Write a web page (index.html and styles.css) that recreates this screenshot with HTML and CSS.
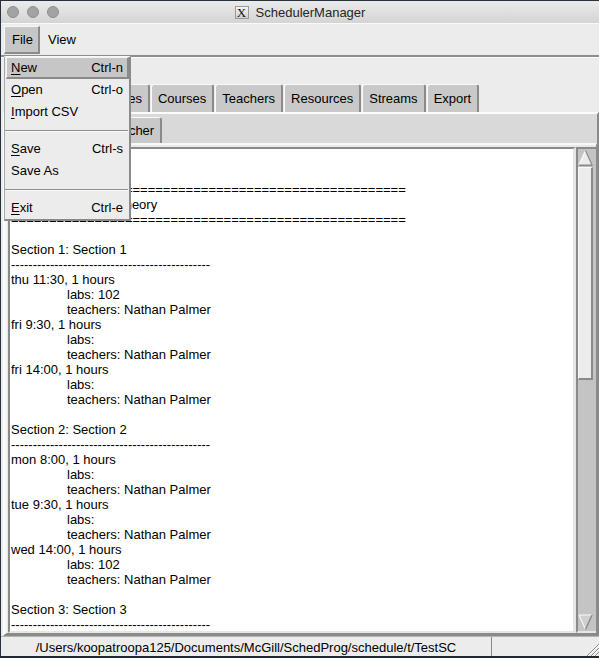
FILE: index.html
```html
<!DOCTYPE html>
<html>
<head>
<meta charset="utf-8">
<title>SchedulerManager</title>
<link rel="stylesheet" href="styles.css">
</head>
<body>
<div class="window">
  <div class="titlebar">
    <div class="lights"><span class="light"></span><span class="light"></span><span class="light"></span></div>
    <div class="title"><span class="xicon">X</span><span class="title-text">SchedulerManager</span></div>
    <div class="title-spacer"></div>
  </div>
  <div class="menubar">
    <span class="mb active">File</span>
    <span class="mb">View</span>
  </div>
  <div class="toolbar"></div>
  <div class="tabs">
    <span class="tab selected">Overview</span>
    <span class="tab">Schedules</span>
    <span class="tab">Courses</span>
    <span class="tab">Teachers</span>
    <span class="tab">Resources</span>
    <span class="tab">Streams</span>
    <span class="tab">Export</span>
  </div>
  <div class="panel">
    <div class="subtabs">
      <span class="tab sub">Course</span>
      <span class="tab sub">Teacher</span>
    </div>
    <div class="subpanel">
      <div class="textframe">
        <div class="text">
          <div class="ln">Nathan Palmer</div>
          <div class="ln"></div>
          <div class="ln">====================================================</div>
          <div class="ln">Course:&#8201;Schedule Theory</div>
          <div class="ln">====================================================</div>
          <div class="ln"></div>
          <div class="ln">Section 1: Section 1</div>
          <div class="ln">----------------------------------------------</div>
          <div class="ln">thu 11:30, 1 hours</div>
          <div class="ln ind">labs: 102</div>
          <div class="ln ind">teachers: Nathan Palmer</div>
          <div class="ln">fri 9:30, 1 hours</div>
          <div class="ln ind">labs:</div>
          <div class="ln ind">teachers: Nathan Palmer</div>
          <div class="ln">fri 14:00, 1 hours</div>
          <div class="ln ind">labs:</div>
          <div class="ln ind">teachers: Nathan Palmer</div>
          <div class="ln"></div>
          <div class="ln">Section 2: Section 2</div>
          <div class="ln">----------------------------------------------</div>
          <div class="ln">mon 8:00, 1 hours</div>
          <div class="ln ind">labs:</div>
          <div class="ln ind">teachers: Nathan Palmer</div>
          <div class="ln">tue 9:30, 1 hours</div>
          <div class="ln ind">labs:</div>
          <div class="ln ind">teachers: Nathan Palmer</div>
          <div class="ln">wed 14:00, 1 hours</div>
          <div class="ln ind">labs: 102</div>
          <div class="ln ind">teachers: Nathan Palmer</div>
          <div class="ln"></div>
          <div class="ln">Section 3: Section 3</div>
          <div class="ln">----------------------------------------------</div>
        </div>
        <div class="scrollbar">
          <div class="arrow up">
            <svg width="15" height="18" viewBox="0 0 15 18">
              <polygon points="7.5,1.5 14,16 1,16" fill="#ececec"/>
              <line x1="1" y1="16" x2="7.5" y2="1.5" stroke="#fafafa" stroke-width="1.2"/>
              <line x1="7.5" y1="1.5" x2="14" y2="16" stroke="#8a8a8a" stroke-width="1.2"/>
              <line x1="1" y1="16.3" x2="14.5" y2="16.3" stroke="#8a8a8a" stroke-width="1.6"/>
            </svg>
          </div>
          <div class="thumb"></div>
          <div class="trough"></div>
          <div class="arrow down">
            <svg width="15" height="17" viewBox="0 0 15 17">
              <polygon points="1,1 14,1 7.5,15.5" fill="#cfcfcf"/>
              <line x1="1" y1="1" x2="14" y2="1" stroke="#f4f4f4" stroke-width="1.2"/>
              <line x1="1" y1="1" x2="7.5" y2="15.5" stroke="#f4f4f4" stroke-width="1.2"/>
              <line x1="14" y1="1" x2="7.5" y2="15.5" stroke="#8a8a8a" stroke-width="1.4"/>
            </svg>
          </div>
        </div>
      </div>
    </div>
  </div>
  <div class="statusbar">
    <div class="cell path">/Users/koopatroopa125/Documents/McGill/SchedProg/schedule/t/TestSC</div>
    <div class="cell gripcell">
      <svg class="grip" width="13" height="13" viewBox="0 0 13 13">
        <line x1="13" y1="1" x2="1" y2="13" stroke="#8a8a8a" stroke-width="1"/>
        <line x1="13" y1="2" x2="2" y2="13" stroke="#ffffff" stroke-width="1"/>
        <line x1="13" y1="5" x2="5" y2="13" stroke="#8a8a8a" stroke-width="1"/>
        <line x1="13" y1="6" x2="6" y2="13" stroke="#ffffff" stroke-width="1"/>
        <line x1="13" y1="9" x2="9" y2="13" stroke="#8a8a8a" stroke-width="1"/>
        <line x1="13" y1="10" x2="10" y2="13" stroke="#ffffff" stroke-width="1"/>
      </svg>
    </div>
  </div>

  <div class="menu">
    <div class="mi hl"><span><u>N</u>ew</span><span>Ctrl-n</span></div>
    <div class="mi"><span><u>O</u>pen</span><span>Ctrl-o</span></div>
    <div class="mi"><span><u>I</u>mport CSV</span><span></span></div>
    <div class="sep"><span class="sepline"></span></div>
    <div class="mi"><span><u>S</u>ave</span><span>Ctrl-s</span></div>
    <div class="mi"><span>Save As</span><span></span></div>
    <div class="sep"><span class="sepline"></span></div>
    <div class="mi"><span><u>E</u>xit</span><span>Ctrl-e</span></div>
  </div>
</div>
</body>
</html>
```

FILE: styles.css
```css
* { box-sizing: border-box; }

html, body {
  margin: 0;
  padding: 0;
  background: #1f2630;
}

body {
  font-family: "Liberation Sans", Arial, Helvetica, sans-serif;
  font-size: 13px;
  color: #000;
}

.window {
  position: relative;
  width: 599px;
  height: 658px;
  overflow: hidden;
  display: flex;
  flex-direction: column;
  background: #ececec;
  border-top: 1px solid #2a3038;
  border-left: 1px solid #2a3038;
  border-bottom: 2px solid #222831;
}

/* ---------- title bar ---------- */
.titlebar {
  flex: 0 0 23px;
  display: grid;
  grid-template-columns: 1fr auto 1fr;
  align-items: center;
  background: linear-gradient(#ebebeb, #d4d4d4);
  border-bottom: 1px solid #fafafa;
}

.lights {
  display: flex;
  gap: 8px;
  padding-left: 6px;
}

.light {
  width: 12px;
  height: 12px;
  border-radius: 50%;
  background: #a3a3a3;
  border: 1px solid #909090;
}

.title {
  display: flex;
  align-items: center;
  gap: 7px;
  padding-left: 0;
  color: #262626;
}

.xicon {
  width: 14px;
  height: 13px;
  display: flex;
  align-items: center;
  justify-content: center;
  font-family: "Liberation Serif", "Times New Roman", serif;
  font-size: 13px;
  line-height: 1;
  background: linear-gradient(#f4f4f4, #d0d0d0);
  border: 1px solid #9a9a9a;
  color: #111;
}

.title-text {
  font-size: 13px;
}

/* ---------- menubar ---------- */
.menubar {
  flex: 0 0 33px;
  display: flex;
  align-items: flex-start;
  padding: 2px 0 0 3px;
  border-bottom: 2px solid #8e8e8e;
}

.mb {
  height: 28px;
  display: flex;
  align-items: center;
  padding: 0 5px 0 7px;
  border-style: solid;
  border-width: 1px 2px 2px 1px;
  border-color: transparent;
}

.mb.active {
  background: #c6c6c6;
  border-color: #f6f6f6 #8a8a8a #8a8a8a #f6f6f6;
}

/* ---------- toolbar ---------- */
.toolbar {
  flex: 0 0 27px;
  border-top: 1px solid #fbfbfb;
}

/* ---------- tabs ---------- */
.tabs {
  flex: 0 0 28px;
  display: flex;
  align-items: flex-end;
  gap: 1px;
  padding-left: 3px;
}

.tab {
  height: 28px;
  display: flex;
  align-items: center;
  padding: 0 6px 0 6px;
  background: #c9c9c9;
  border-style: solid;
  border-width: 1px 2px 0 1px;
  border-color: #f9f9f9 #8a8a8a #f9f9f9 #f9f9f9;
  border-radius: 3px 3px 0 0;
  white-space: nowrap;
}

.tab.selected {
  background: #d9d9d9;
}

.tab.sub {
  height: 26px;
}

/* ---------- panel ---------- */
.panel {
  flex: 1 1 auto;
  display: flex;
  flex-direction: column;
  margin-left: 2px;
  background: #d9d9d9;
  border-style: solid;
  border-width: 2px 2px 2px 2px;
  border-color: #fbfbfb #8a8a8a #8a8a8a #fbfbfb;
  min-height: 0;
}

.subtabs {
  flex: 0 0 29px;
  display: flex;
  align-items: flex-end;
  gap: 2px;
  padding-left: 37px;
}

.subpanel {
  flex: 1 1 auto;
  display: flex;
  flex-direction: column;
  background: #e8e8e8;
  border-style: solid;
  border-width: 2px 1px 1px 2px;
  border-color: #f7f7f7 #8a8a8a #8a8a8a #f5f5f5;
  padding: 2px 0 0 1px;
  min-height: 0;
}

.textframe {
  flex: 1 1 auto;
  display: flex;
  min-height: 0;
}

.text {
  flex: 1 1 auto;
  background: #ffffff;
  border-style: solid;
  border-width: 2px 3px 2px 2px;
  border-color: #8a8a8a #e6e6e6 #e6e6e6 #8a8a8a;
  padding: 3px 0 0 1px;
  overflow: hidden;
  min-width: 0;
}

.ln {
  height: 15px;
  line-height: 15px;
  white-space: pre;
}

.ln.ind {
  padding-left: 56px;
}

/* ---------- scrollbar ---------- */
.scrollbar {
  flex: 0 0 20px;
  display: flex;
  flex-direction: column;
  background: #c4c4c4;
  border-style: solid;
  border-width: 2px 0 2px 2px;
  border-color: #8a8a8a #e6e6e6 #e6e6e6 #8a8a8a;
  padding-right: 3px;
}

.arrow {
  display: flex;
}

.arrow.up {
  flex: 0 0 18px;
}

.arrow.down {
  flex: 0 0 17px;
}

.thumb {
  flex: 0 0 213px;
  background: #ececec;
  border-style: solid;
  border-width: 1px 2px 2px 1px;
  border-color: #fafafa #8a8a8a #8a8a8a #fafafa;
}

.trough {
  flex: 1 1 auto;
}

/* ---------- status bar ---------- */
.statusbar {
  flex: 0 0 20px;
  display: flex;
  background: #ececec;
  border-top: 1px solid #b4b4b4;
}

.cell {
  height: 19px;
}

.cell.path {
  flex: 0 0 491px;
  padding-top: 3px;
  line-height: 15px;
  text-align: center;
  border-right: 1px solid #8a8a8a;
  white-space: nowrap;
}

.cell.gripcell {
  flex: 1 1 auto;
  display: flex;
  align-items: flex-end;
  justify-content: flex-end;
}

.grip {
  display: block;
}

/* ---------- dropdown menu ---------- */
.menu {
  position: absolute;
  left: 3px;
  top: 55px;
  width: 127px;
  background: #ececec;
  border-style: solid;
  border-width: 1px 2px 2px 1px;
  border-color: #f8f8f8 #8a8a8a #8a8a8a #a8a8a8;
  padding: 0 0 0 1px;
  z-index: 10;
}

.mi {
  height: 22px;
  display: flex;
  align-items: center;
  justify-content: space-between;
  padding: 0 4px 0 4px;
  border-style: solid;
  border-width: 1px 2px 2px 1px;
  border-color: transparent;
  white-space: nowrap;
}

.mi.hl {
  background: #c6c6c6;
  border-color: #f4f4f4 #8a8a8a #8a8a8a #f4f4f4;
}

.mi u {
  text-decoration: underline;
  text-underline-offset: 2px;
}

.sep {
  height: 15px;
  display: flex;
  align-items: center;
}

.sepline {
  display: block;
  width: 123px;
  margin-left: -1px;
  border-top: 1px solid #8e8e8e;
  border-bottom: 1px solid #fbfbfb;
}
```
